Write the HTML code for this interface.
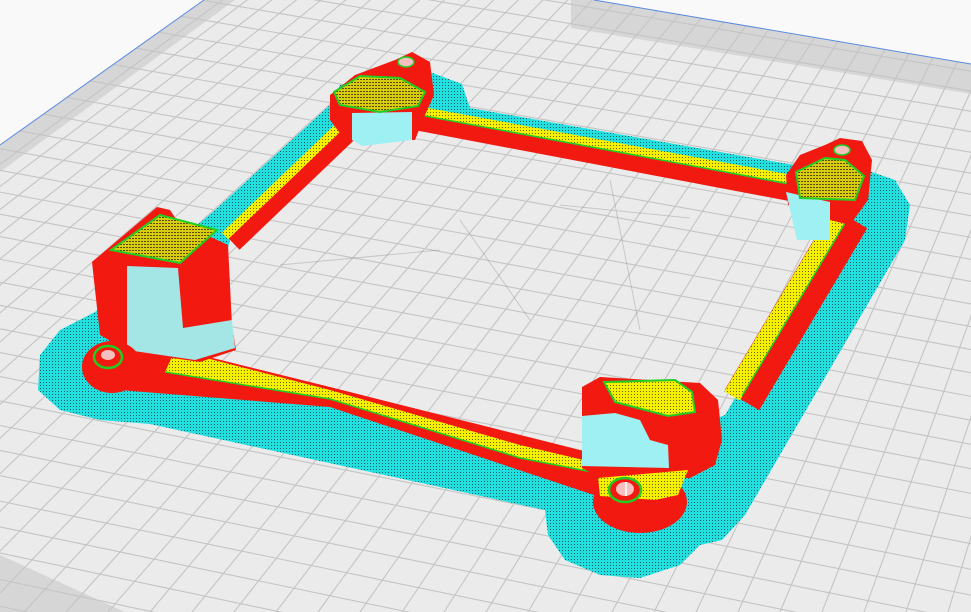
<!DOCTYPE html>
<html><head><meta charset="utf-8"><style>html,body{margin:0;padding:0;background:#ebebeb;overflow:hidden;width:971px;height:612px}svg{display:block}</style></head>
<body>
<svg id="s" width="971" height="612" viewBox="0 0 971 612" xmlns="http://www.w3.org/2000/svg">
<defs>
<pattern id="cy" width="3" height="3" patternUnits="userSpaceOnUse"><rect width="3" height="3" fill="#22e0e0"/><rect x="1" y="1" width="1" height="1" fill="#0b5f60"/></pattern>
<pattern id="ye" width="3" height="3" patternUnits="userSpaceOnUse"><rect width="3" height="3" fill="#f4f000"/><rect x="1" y="1" width="1" height="1" fill="#6a6400"/></pattern>
<pattern id="ol" width="3" height="3" patternUnits="userSpaceOnUse"><rect width="3" height="3" fill="#d8cc10"/><rect x="0" y="1" width="2" height="1" fill="#5a4a00"/></pattern>
</defs>
<rect width="971" height="612" fill="#ebebeb"/>
<polygon points="0,145 200,0 235,0 0,172" fill="#d6d6d6"/>
<polygon points="594,0 971,64 971,94 571,28 571,0" fill="#d6d6d6"/>
<polygon points="0,555 125,612 0,612" fill="#d6d6d6"/>
<g id="grid" stroke="#c4c4c4" stroke-width="1.1"></g>
<polygon points="0,0 204,0 0,145" fill="#f9f9f9"/>
<polygon points="594,0 971,0 971,64" fill="#f9f9f9"/>
<line x1="0" y1="145" x2="204" y2="0" stroke="#5a8ae0" stroke-width="1"/>
<line x1="594" y1="0" x2="971" y2="64" stroke="#5a8ae0" stroke-width="1"/>
<g stroke="#777" stroke-width="1" opacity="0.3">
<line x1="280" y1="265" x2="440" y2="250"/><line x1="460" y1="220" x2="530" y2="320"/><line x1="560" y1="205" x2="690" y2="218"/><line x1="610" y1="180" x2="640" y2="330"/>
</g>

<!-- brim (ring) -->
<path fill="url(#cy)" fill-rule="evenodd" d="M430,72 L462,84 L470,108 L800,166 L860,168 L895,180 L910,205 L905,240 L745,515 L722,540 L700,545 L680,565 L640,578 L600,575 L565,560 L548,535 L545,510 L150,424 L100,420 L60,410 L38,390 L40,355 L60,330 L95,312 L215,210 L330,105 L340,85 Z
M352,128 L415,118 L790,190 L835,230 L725,415 L590,465 L200,360 L230,240 Z"/>

<!-- top rail -->
<line x1="415" y1="122" x2="795" y2="194" stroke="#f21a10" stroke-width="16"/>
<line x1="420" y1="111" x2="795" y2="180" stroke="url(#ye)" stroke-width="9"/>
<line x1="420" y1="115" x2="795" y2="185" stroke="#22cc22" stroke-width="1.5"/>
<!-- left rail -->
<line x1="350" y1="133" x2="234" y2="244" stroke="#f21a10" stroke-width="16"/>
<line x1="342" y1="124" x2="225" y2="236" stroke="url(#ye)" stroke-width="9"/>
<!-- right rail -->
<line x1="742" y1="400" x2="850" y2="218" stroke="#f21a10" stroke-width="40"/>
<line x1="732" y1="396" x2="840" y2="214" stroke="url(#ye)" stroke-width="18"/>
<line x1="742" y1="396" x2="848" y2="218" stroke="#22cc22" stroke-width="1.5"/>
<!-- bottom rail -->
<polygon fill="#f21a10" points="140,340 330,387 600,455 600,497 330,407 120,390"/>
<polygon fill="url(#ye)" points="175,350 330,390 520,445 592,462 592,472 520,458 330,399 165,372"/>
<polyline fill="none" stroke="#22cc22" stroke-width="1.5" points="165,372 330,399 520,458 592,472"/>

<!-- left post -->
<path fill="#f21a10" d="M92,262 L157,207 L170,210 L178,222 L228,245 L232,325 L236,350 L200,362 L130,352 L100,335 Z"/>
<polygon fill="#9ff0f2" opacity="0.95" points="127,266 178,268 183,328 232,320 235,348 195,360 127,350"/>
<polygon fill="url(#ol)" stroke="#22cc22" stroke-width="2" points="111,250 160,215 217,230 180,263"/>
<!-- bottom-left boss -->
<ellipse cx="112" cy="367" rx="30" ry="26" fill="#f21a10"/>
<ellipse cx="108" cy="357" rx="14" ry="11" fill="#f21a10" stroke="#22cc22" stroke-width="2.5"/>
<ellipse cx="108" cy="355" rx="7" ry="5" fill="#f6c0c0"/>

<!-- top-left post -->
<path fill="#f21a10" d="M330,95 L355,75 L395,60 L412,52 L430,62 L434,95 L425,115 L415,140 L345,140 L330,120 Z"/>
<polygon fill="#9ff0f2" points="352,113 412,112 412,140 362,146 352,140"/>
<polygon fill="url(#ol)" stroke="#22cc22" stroke-width="2" points="334,92 360,76 400,78 425,92 418,106 380,112 340,105"/>
<ellipse cx="406" cy="62" rx="8" ry="5" fill="#f6c0c0" stroke="#22cc22" stroke-width="1.5"/>

<!-- top-right post -->
<path fill="#f21a10" d="M786,175 L800,155 L825,145 L840,138 L862,141 L872,160 L868,200 L850,225 L830,220 L788,205 Z"/>
<polygon fill="#9ff0f2" points="786,192 830,202 830,240 797,240"/>
<polygon fill="url(#ol)" stroke="#22cc22" stroke-width="2" points="796,172 825,158 845,160 864,176 855,200 800,198"/>
<ellipse cx="842" cy="150" rx="8" ry="5" fill="#f6c0c0" stroke="#22cc22" stroke-width="1.5"/>

<!-- right post -->
<path fill="#f21a10" d="M582,387 L600,377 L700,383 L718,400 L722,440 L715,465 L690,478 L600,478 L582,468 Z"/>
<polygon fill="#9ff0f2" points="582,416 615,413 640,420 650,440 668,445 669,468 582,466"/>
<polygon fill="url(#ye)" stroke="#22cc22" stroke-width="2" points="604,382 675,380 692,392 695,412 668,416 615,402"/>
<!-- bottom-right boss -->
<ellipse cx="640" cy="502" rx="47" ry="31" fill="#f21a10"/>
<polygon fill="url(#ye)" points="598,478 688,470 678,495 655,500 600,496"/>
<ellipse cx="625" cy="490" rx="16" ry="12" fill="#f21a10" stroke="#22cc22" stroke-width="2.5"/>
<ellipse cx="625" cy="489" rx="9" ry="7" fill="#f6c0c0"/>
<line x1="626" y1="482" x2="626" y2="496" stroke="#fff" stroke-width="1.5"/>
</svg>
<script>
(function(){
var g=document.getElementById('grid'),ns='http://www.w3.org/2000/svg';
function L(a,b,c,d){var l=document.createElementNS(ns,'line');l.setAttribute('x1',a);l.setAttribute('y1',b);l.setAttribute('x2',c);l.setAttribute('y2',d);g.appendChild(l);}
var VA=[1400,-870],VB=[-15000,-2600];
for(var x0=-900;x0<1700;x0+=42){L(VA[0],VA[1],x0,612);}
var y=-200;while(y<700){var sl=(y-VB[1])/(0-VB[0]);L(0,y,971,y+sl*971);y+=18+Math.max(0,(y+150))*0.012;}
})();
</script>
</body></html>
